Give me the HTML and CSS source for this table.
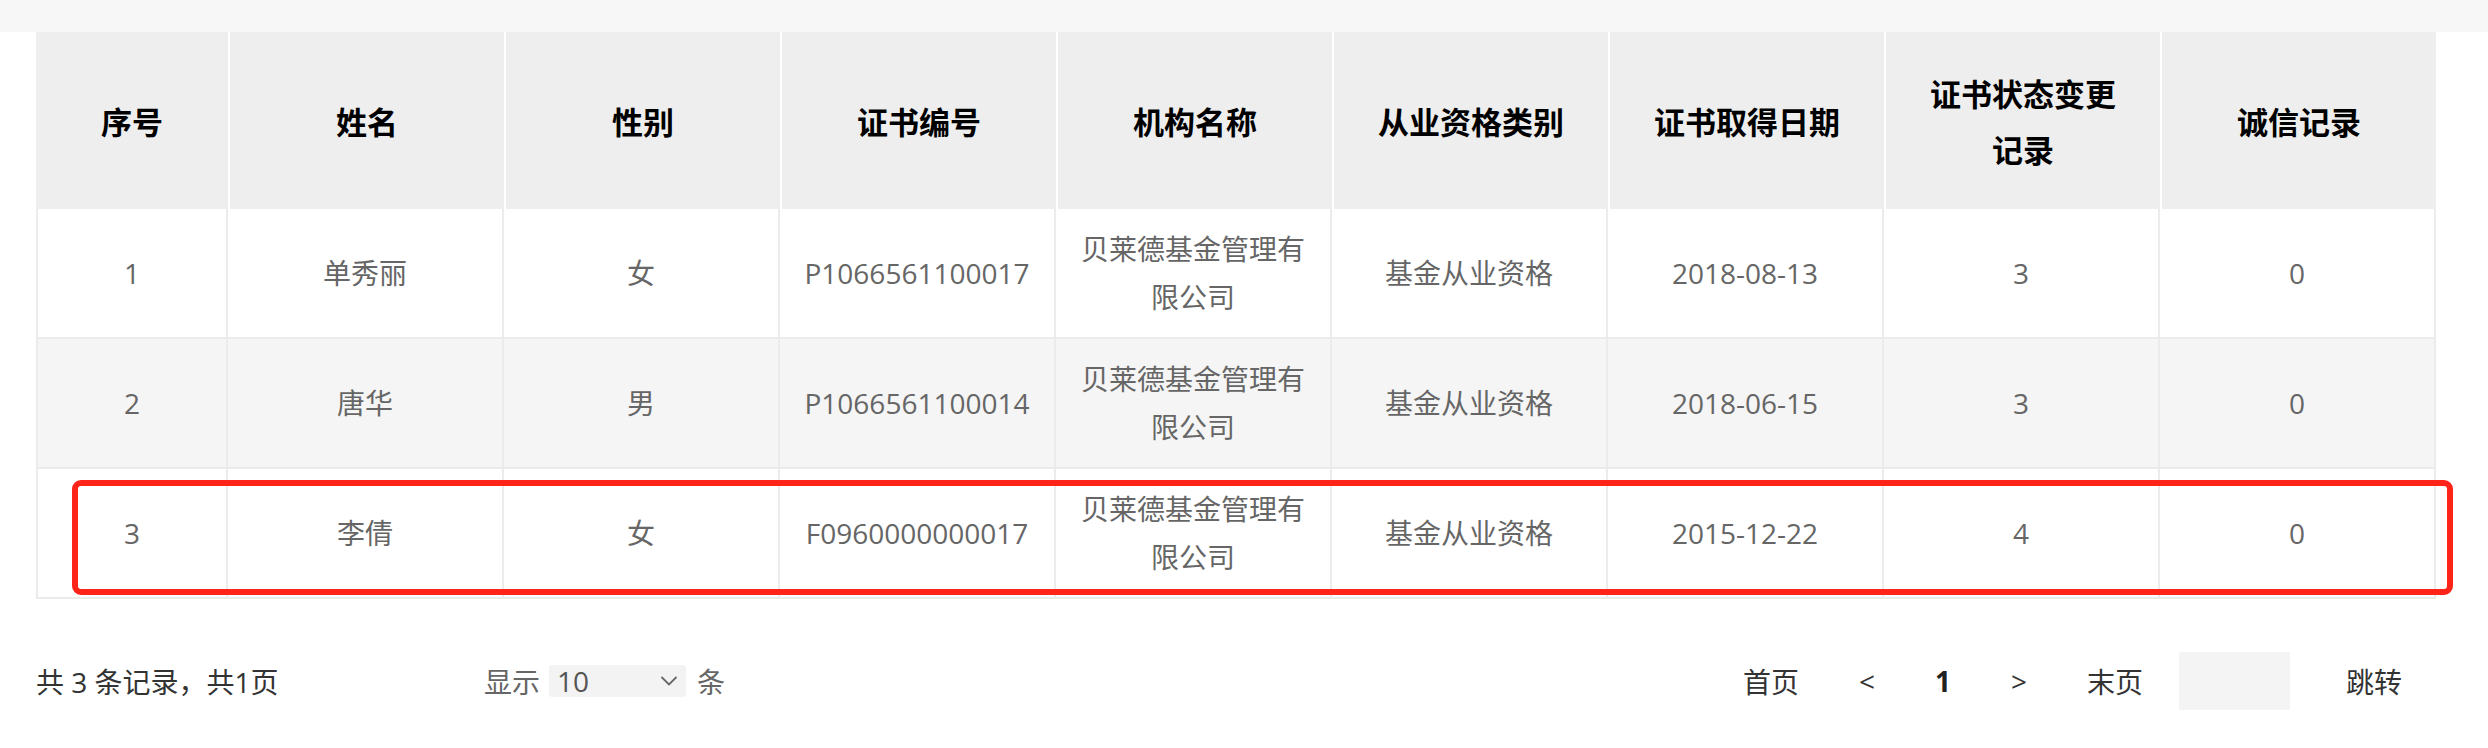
FILE: index.html
```html
<!DOCTYPE html>
<html lang="zh-CN">
<head>
<meta charset="utf-8">
<title>从业人员信息</title>
<link rel="stylesheet" href="styles.css">
</head>
<body>
<div class="topband"></div>
<main class="page">
  <div class="table-wrap">
    <table class="grid">
      <colgroup>
        <col class="c-first">
        <col class="c-std"><col class="c-std"><col class="c-std"><col class="c-std">
        <col class="c-std"><col class="c-std"><col class="c-std"><col class="c-std">
      </colgroup>
      <thead>
        <tr>
          <th>序号</th>
          <th>姓名</th>
          <th>性别</th>
          <th>证书编号</th>
          <th>机构名称</th>
          <th>从业资格类别</th>
          <th>证书取得日期</th>
          <th>证书状态变更记录</th>
          <th>诚信记录</th>
        </tr>
      </thead>
      <tbody>
        <tr>
          <td>1</td>
          <td>单秀丽</td>
          <td>女</td>
          <td>P1066561100017</td>
          <td>贝莱德基金管理有限公司</td>
          <td>基金从业资格</td>
          <td>2018-08-13</td>
          <td>3</td>
          <td>0</td>
        </tr>
        <tr class="alt">
          <td>2</td>
          <td>唐华</td>
          <td>男</td>
          <td>P1066561100014</td>
          <td>贝莱德基金管理有限公司</td>
          <td>基金从业资格</td>
          <td>2018-06-15</td>
          <td>3</td>
          <td>0</td>
        </tr>
        <tr>
          <td>3</td>
          <td>李倩</td>
          <td>女</td>
          <td>F0960000000017</td>
          <td>贝莱德基金管理有限公司</td>
          <td>基金从业资格</td>
          <td>2015-12-22</td>
          <td>4</td>
          <td>0</td>
        </tr>
      </tbody>
    </table>
    <div class="highlight"></div>
  </div>

  <div class="footer">
    <div class="total">共 3 条记录，共1页</div>
    <div class="pagesize">
      <span class="lbl">显示</span>
      <div class="select">
        <span>10</span>
        <svg class="chev" width="18" height="12" viewBox="0 0 18 12"><path d="M1.5 2 L9 9.5 L16.5 2" fill="none" stroke="#666" stroke-width="1.8"/></svg>
      </div>
      <span class="lbl">条</span>
    </div>
    <nav class="pager">
      <a class="pg">首页</a>
      <a class="pg arrow">&lt;</a>
      <a class="pg cur">1</a>
      <a class="pg arrow">&gt;</a>
      <a class="pg">末页</a>
      <div class="jumpbox"></div>
      <a class="pg go">跳转</a>
    </nav>
  </div>
</main>
</body>
</html>
```

FILE: styles.css
```css
html, body {
  margin: 0;
  padding: 0;
  background: #fff;
}
body {
  font-family: "Open Sans", "Noto Sans CJK SC", sans-serif;
  color: #333;
}
.topband {
  height: 32px;
  background: #f7f7f7;
}
.page {
  padding: 0 52px 0 36px;
}
.table-wrap {
  position: relative;
  width: 2400px;
}
.grid {
  width: 2400px;
  table-layout: fixed;
  border-collapse: separate;
  border-spacing: 0;
}
.c-first { width: 192px; }
.c-std { width: 276px; }

.grid th {
  background: #eeeeee;
  color: #000;
  font-family: "Noto Sans CJK SC", sans-serif;
  font-weight: 700;
  font-size: 31px;
  line-height: 56px;
  padding: 32px 30px;
  height: 113px;
  text-align: center;
  vertical-align: middle;
}
.grid th + th {
  border-left: 2px solid #fff;
}
.grid td {
  height: 128px;
  padding: 0 20px;
  font-size: 28px;
  line-height: 48px;
  color: #666;
  text-align: center;
  vertical-align: middle;
  border-right: 2px solid #ebebeb;
  border-bottom: 2px solid #ebebeb;
  background: #fff;
}
.grid td:first-child {
  border-left: 2px solid #ebebeb;
}
.grid tr.alt td {
  background: #f5f5f5;
}
.highlight {
  position: absolute;
  left: 36px;
  top: 448px;
  width: 2381px;
  height: 115px;
  box-sizing: border-box;
  border: 6px solid #ff2418;
  border-radius: 9px;
}

.footer {
  display: flex;
  align-items: center;
  height: 164px;
  width: 2400px;
  font-size: 28px;
}
.total {
  width: 448px;
  color: #333;
}
.pagesize {
  display: flex;
  align-items: center;
  color: #666;
}
.select {
  display: flex;
  align-items: center;
  justify-content: space-between;
  box-sizing: border-box;
  width: 137px;
  height: 32px;
  margin: 0 11px 0 9px;
  padding: 0 8px 0 8px;
  background: #f3f3f3;
  border-radius: 3px;
  color: #555;
  font-size: 28px;
}
.chev { display: block; }
.pager {
  margin-left: auto;
  display: flex;
  align-items: center;
  color: #333;
}
.pg {
  display: block;
  margin-left: 60px;
}
.pg:first-child { margin-left: 0; }
.cur { font-weight: 700; color: #222; }
.jumpbox {
  width: 111px;
  height: 58px;
  margin-left: 36px;
  background: #f4f4f4;
}
.pg.go {
  margin-left: 56px;
  padding-right: 34px;
}
```
